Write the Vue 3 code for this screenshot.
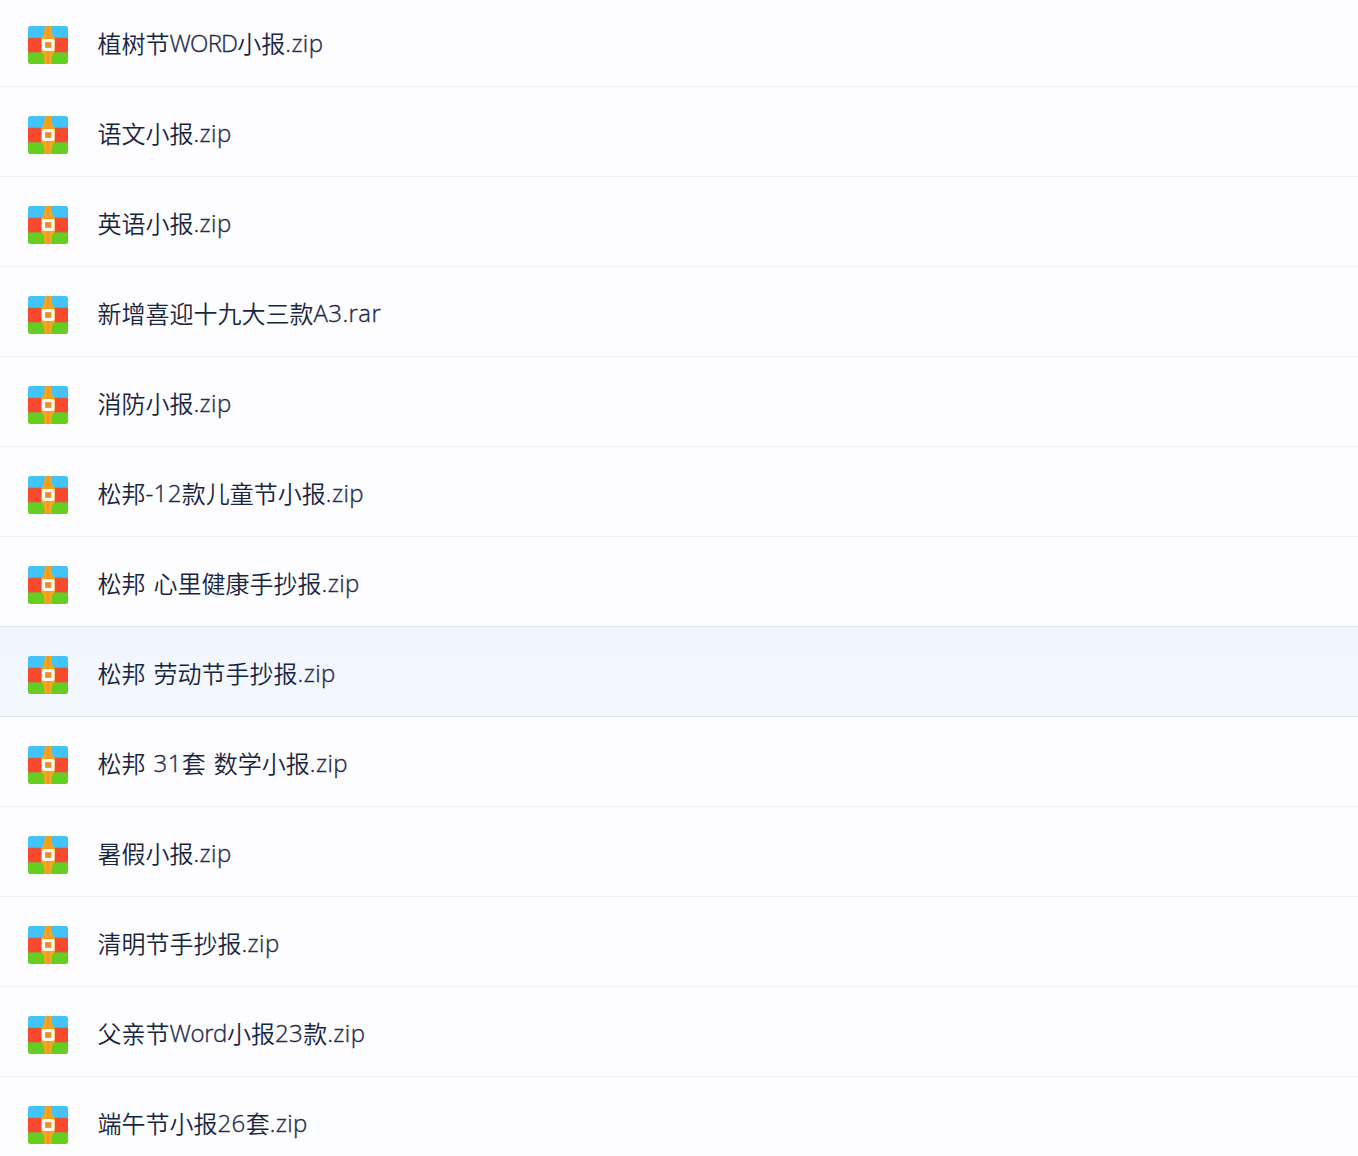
<template>
    <ul class="files">
        <li
            v-for="file in files"
            :key="file"
            class="row"
            :class="{ active: file === selected }"
        >
            <svg class="icon" viewBox="0 0 40 38">
                <defs>
                    <clipPath id="archive">
                        <rect width="40" height="38" rx="2.5" />
                    </clipPath>
                </defs>
                <g clip-path="url(#archive)">
                    <rect width="40" height="13" fill="#42c3fa" />
                    <rect y="12" width="40" height="15" fill="#f8492f" />
                    <rect y="26" width="40" height="12" fill="#65ce20" />
                    <path d="M0 12h40M0 26.3h40" stroke="#b47745" stroke-width="1" opacity=".65" />
                    <path d="M17 0h6l1 7q.5 4 3 5.5v13.5q-2.5 1-3 4.5l-.5 7.5h-7l-.5-7.5q-.5-3.5-3-4.5V12.5q2.5-1.5 3-5.5z" fill="#f9a51b" />
                    <path d="M20 0v38" stroke="#ea9a25" stroke-width="2" />
                </g>
                <rect x="15.5" y="14.5" width="9.5" height="9" rx=".5" fill="#f09a55" stroke="#fffaf2" stroke-width="3" />
                <rect x="18" y="17" width="4.5" height="4" fill="#dd9226" />
            </svg>
            <span class="name"><span
                v-for="(part, index) in split(file)"
                :key="index"
                :class="{ latin: /^[\w.-]/.test(part), word: /^[A-Z][A-Za-z]/.test(part) }"
            >{{ part }}</span></span>
        </li>
    </ul>
</template>

<script setup>
import { ref } from "vue";

const files = [
    "植树节WORD小报.zip",
    "语文小报.zip",
    "英语小报.zip",
    "新增喜迎十九大三款A3.rar",
    "消防小报.zip",
    "松邦-12款儿童节小报.zip",
    "松邦 心里健康手抄报.zip",
    "松邦 劳动节手抄报.zip",
    "松邦 31套 数学小报.zip",
    "暑假小报.zip",
    "清明节手抄报.zip",
    "父亲节Word小报23款.zip",
    "端午节小报26套.zip",
];

const selected = ref("松邦 劳动节手抄报.zip");

// latin runs need their own spacing next to the chinese ones
const split = (name) => name.match(/[\w.-]+|[^\w.-]+/g);
</script>

<style>
body {
    background: #fdfcfe;
    overflow: hidden;
}
</style>

<style scoped>
.files {
    height: 1156px;
    margin: 0;
    padding: 0;
    overflow: hidden;
    list-style: none;
}

.row {
    box-sizing: border-box;
    height: 90px;
    display: flex;
    align-items: flex-start;
    gap: 29.5px;
    padding: 29px 28px 0;
    border-bottom: 1px solid #f1f1f4;
}

.row:first-child {
    height: 87px;
    padding-top: 26px;
}

.row.active {
    background: linear-gradient(#f1f5fe, #f3f7fe 75%, #f1f9fc);
    border-color: #d8e8f0;
    box-shadow: 0 -1px #dbe6f0;
}

.icon {
    flex: none;
    width: 40px;
    height: 38px;
}

.name {
    height: 36px;
    margin-top: -1px;
    line-height: 36px;
    font-family: "Open Sans", "Noto Sans CJK SC", sans-serif;
    font-size: 24px;
    font-weight: 350;
    color: #17253f;
    white-space: pre;
    word-spacing: 1.8px;
}

.latin {
    letter-spacing: 0.4px;
    color: #1f2b4b;
    vertical-align: 1px;
    -webkit-text-stroke: 0.35px #1f2b4b;
}

.word {
    letter-spacing: -0.4px;
}

.row:first-child .word {
    letter-spacing: -0.8px;
}
</style>
